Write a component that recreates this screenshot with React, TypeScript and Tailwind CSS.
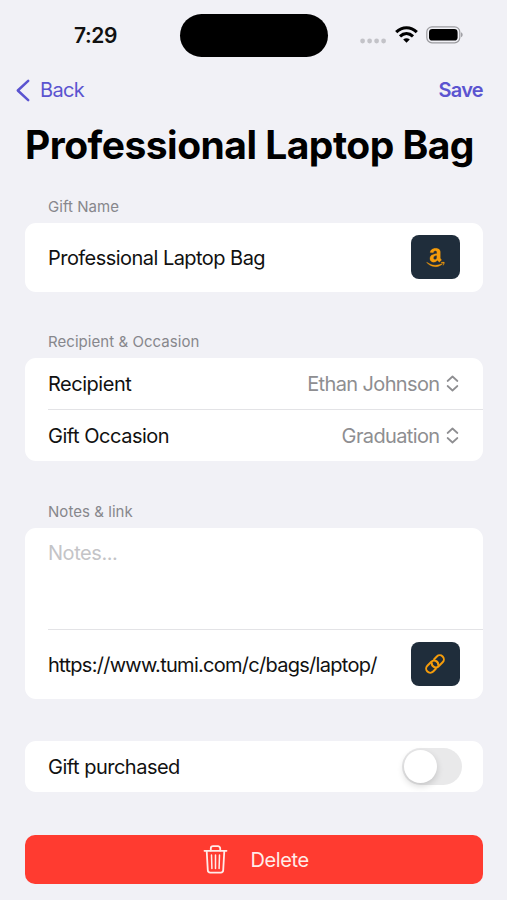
import { useState, type ReactNode } from "react";
import clsx from "clsx";
import { FaAmazon } from "react-icons/fa";

function StatusBar() {
  return (
    <div className="flex h-[57px] items-start pt-[14px]">
      <div className="w-[180px] pl-[74px] pt-[7px] text-[21px] leading-[29px] font-semibold tracking-[-0.4px]">7:29</div>
      <div className="h-[43px] w-[148px] rounded-full bg-black" />
      <div className="flex h-[43px] flex-1 items-center pl-[32px]">
        <svg width="26" height="6" viewBox="0 0 26 6" className="mt-[11px]" fill="#c3c3c8">
          <circle cx="2.6" cy="3" r="2.4" />
          <circle cx="9.6" cy="3" r="2.4" />
          <circle cx="16.6" cy="3" r="2.4" />
          <circle cx="23.6" cy="3" r="2.4" />
        </svg>
        <svg width="23" height="17" viewBox="0 0 23 17" className="ml-[9px] -mt-[2px]" fill="none" stroke="black" strokeWidth="3.1">
          <path d="M1.2 6.2C7.3 0.3 15.7 0.3 21.8 6.2" />
          <path d="M5 10.3C8.9 6.7 14.1 6.7 18 10.3" />
          <path d="M11.5 16.8L8.2 13.5C10.2 11.8 12.8 11.8 14.8 13.5Z" fill="black" stroke="none" />
        </svg>
        <svg width="37" height="18" viewBox="0 0 37 18" className="ml-[8px] -mt-[2px]">
          <rect x="0.8" y="0.8" width="33" height="16" rx="5.2" fill="none" stroke="#9b9b9f" strokeWidth="1.2" />
          <rect x="3" y="3" width="28.6" height="11.6" rx="3.4" fill="black" />
          <path d="M35.2 6.3C37 7 37 10.6 35.2 11.3Z" fill="#8e8e93" />
        </svg>
      </div>
    </div>
  );
}

function Section({ label, className, children }: { label?: string; className?: string; children: ReactNode }) {
  return (
    <section className={className}>
      {label ? (
        <h2 className="mb-[6px] pl-[23.5px] text-[15px] leading-[20px] tracking-[0.05px] text-[#87878c]">{label}</h2>
      ) : null}
      <div className="overflow-hidden rounded-[11px] bg-white pl-[23.5px]">{children}</div>
    </section>
  );
}

function PickerRow({ label, value, className }: { label: string; value: string; className?: string }) {
  return (
    <div className={clsx("flex items-center justify-between pr-[24px]", className)}>
      <span className="text-[20px] tracking-[-0.48px]">{label}</span>
      <span className="flex items-center gap-[6px] text-[#8e8e91]">
        <span className="text-[20px] tracking-[-0.63px]">{value}</span>
        <svg width="13" height="17" viewBox="0 0 13 17" fill="none" stroke="currentColor" strokeWidth="1.7" strokeLinecap="round" strokeLinejoin="round">
          <path d="M1.6 6L6.5 1.5L11.4 6" />
          <path d="M1.6 11L6.5 15.5L11.4 11" />
        </svg>
      </span>
    </div>
  );
}

function IconButton({ label, children }: { label: string; children: ReactNode }) {
  return (
    <button aria-label={label} className="mb-[1px] flex h-[44px] w-[49px] items-center justify-center rounded-[8px] bg-[#1f2d3b] text-[#f59c0b]">
      {children}
    </button>
  );
}

export default function App() {
  const [purchased, setPurchased] = useState(false);

  return (
    <main className="h-[900px] w-[507px] overflow-hidden bg-[#f1f1f6] font-['Inter',sans-serif] text-[#111]">
      <StatusBar />

      <nav className="flex h-[66px] items-center justify-between pl-[16px] pr-[24px] text-[20px] text-[#5b54d0]">
        <button className="flex items-center gap-[10px]">
          <svg width="14" height="23" viewBox="0 0 14 23" fill="none" stroke="currentColor" strokeWidth="2.5" strokeLinecap="round" strokeLinejoin="round">
            <path d="M12.2 1.8L1.8 11.5L12.2 21.2" />
          </svg>
          <span className="tracking-[-0.7px]">Back</span>
        </button>
        <button className="font-semibold tracking-[-0.7px]">Save</button>
      </nav>

      <h1 className="pl-[25px] text-[39px] leading-[44px] font-bold tracking-[-0.52px] whitespace-nowrap text-black">
        Professional Laptop Bag
      </h1>

      <div className="px-[24.5px]">
        <Section label="Gift Name" className="mt-[30px]">
          <div className="flex h-[69px] items-center justify-between pr-[23px]">
            <span className="text-[20px] tracking-[-0.54px]">Professional Laptop Bag</span>
            <IconButton label="Search on Amazon">
              <FaAmazon size={21} stroke="currentColor" strokeWidth={6} />
            </IconButton>
          </div>
        </Section>

        <Section label="Recipient & Occasion" className="mt-[40px]">
          <PickerRow label="Recipient" value="Ethan Johnson" className="h-[52px] border-b border-[#e3e3e6]" />
          <PickerRow label="Gift Occasion" value="Graduation" className="h-[51px]" />
        </Section>

        <Section label="Notes & link" className="mt-[41px]">
          <div className="h-[102px] border-b border-[#e3e3e6] pt-[11px] text-[20px] leading-[28px] tracking-[-0.45px] text-[#c4c4c7]">
            Notes...
          </div>
          <div className="flex h-[69px] items-center justify-between pr-[23px]">
            <span className="text-[20px] tracking-[-0.72px]">https://www.tumi.com/c/bags/laptop/</span>
            <IconButton label="Open link">
              <svg width="22" height="22" viewBox="0 0 22 22" fill="none" stroke="currentColor" strokeWidth="2" strokeLinecap="round">
                <g transform="rotate(-45 11 11)">
                  <path d="M8.2 15H4.4A4.1 4.1 0 0 1 4.4 6.8H10A4.1 4.1 0 0 1 12.6 14" />
                  <path d="M13.8 7H17.6A4.1 4.1 0 0 1 17.6 15.2H12A4.1 4.1 0 0 1 9.4 8" />
                </g>
              </svg>
            </IconButton>
          </div>
        </Section>

        <Section className="mt-[42px]">
          <div className="flex h-[51px] items-center justify-between pr-[21px]">
            <span className="text-[20px] tracking-[-0.5px]">Gift purchased</span>
            <button
              role="switch"
              aria-checked={purchased}
              aria-label="Gift purchased"
              onClick={() => setPurchased(!purchased)}
              className={clsx("flex h-[37px] w-[60px] items-center rounded-full px-[2px]", purchased ? "justify-end bg-[#34c759]" : "bg-[#e9e9ea]")}
            >
              <span className="size-[33px] rounded-full bg-white shadow-[0_3px_7px_rgba(0,0,0,0.16)]" />
            </button>
          </div>
        </Section>

        <button className="mt-[43px] flex h-[49px] w-full items-center rounded-[10px] bg-[#ff3b30] pt-[1px] pl-[178px] text-[20px] text-[#ffece9]">
          <svg width="25" height="29" viewBox="0 0 24 29" className="-mt-[1px]" fill="none" stroke="currentColor" strokeWidth="1.8" strokeLinecap="round" strokeLinejoin="round">
            <path d="M1 5.8H23" />
            <path d="M7.3 5.6V3.5A2.3 2.3 0 0 1 9.6 1.2H14.4A2.3 2.3 0 0 1 16.7 3.5V5.6" />
            <path d="M3.2 6L4.3 25.3A2.4 2.4 0 0 0 6.7 27.6H17.3A2.4 2.4 0 0 0 19.7 25.3L20.8 6" />
            <path d="M8 10L8.4 23.5M12 10V23.5M16 10L15.6 23.5" strokeWidth="1.5" />
          </svg>
          <span className="ml-[23px] tracking-[-0.4px]">Delete</span>
        </button>
      </div>
    </main>
  );
}
